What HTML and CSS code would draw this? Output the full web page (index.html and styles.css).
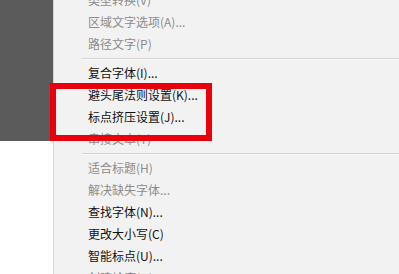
FILE: index.html
```html
<!DOCTYPE html>
<html>
<head>
    <meta charset="UTF-8">
    <title>文字菜单</title>
    <link rel="stylesheet" href="styles.css">
</head>
<body>
    <div class="screen">
        <div class="side">
            <div class="side-dark"></div>
        </div>
        <div class="menu">
            <div class="item off">类型转换(V)</div>
            <div class="item off">区域文字选项(A)...</div>
            <div class="item off">路径文字(P)</div>
            <div class="sep"></div>
            <div class="item">复合字体(I)...</div>
            <div class="item">避头尾法则设置(K)...</div>
            <div class="item">标点挤压设置(J)...</div>
            <div class="item off">串接文本(T)</div>
            <div class="sep"></div>
            <div class="item off">适合标题(H)</div>
            <div class="item off">解决缺失字体...</div>
            <div class="item">查找字体(N)...</div>
            <div class="item">更改大小写(C)</div>
            <div class="item">智能标点(U)...</div>
            <div class="item off">创建轮廓(O)</div>
        </div>
        <!-- red highlight drawn over the menu -->
        <div class="mark"></div>
    </div>
</body>
</html>
```

FILE: styles.css
```css
body {
    margin: 0;
    background-color: #FFFFFF;
    font-family: "Noto Sans CJK SC", "Liberation Sans", sans-serif;
}
.screen {
    position: relative;
    display: flex;
    width: 399px;
    height: 274px;
    overflow: hidden;
}
.side {
    width: 53px;
    flex-shrink: 0;
    background-color: #FFFFFF;
}
.side-dark {
    height: 141px;
    background-color: #5B5B5B; /* dark canvas area */
}
.menu {
    flex: 1;
    background-color: #F2F2F2;
    border-left: 1px solid #D6D6D6;
    padding-top: 0;
}
.item {
    height: 22px;
    line-height: 22px;
    padding-left: 34px;
    font-size: 12px;
    color: #111111;
    white-space: nowrap;
}
.item:first-child {
    margin-top: -11px;
}
.item.off {
    color: #8C8C8C; /* disabled entries */
}
.sep {
    height: 7px;
    margin-left: 28px;
    box-sizing: border-box;
    padding-top: 3px;
}
.sep::before {
    content: "";
    display: block;
    height: 1px;
    background-color: #D3D3D3;
    border-bottom: 1px solid #FAFAFA;
}
.mark {
    position: absolute;
    left: 50px;
    top: 83px;
    width: 162px;
    height: 58px;
    box-sizing: border-box;
    border: 6px solid #E8000A;
}
```
